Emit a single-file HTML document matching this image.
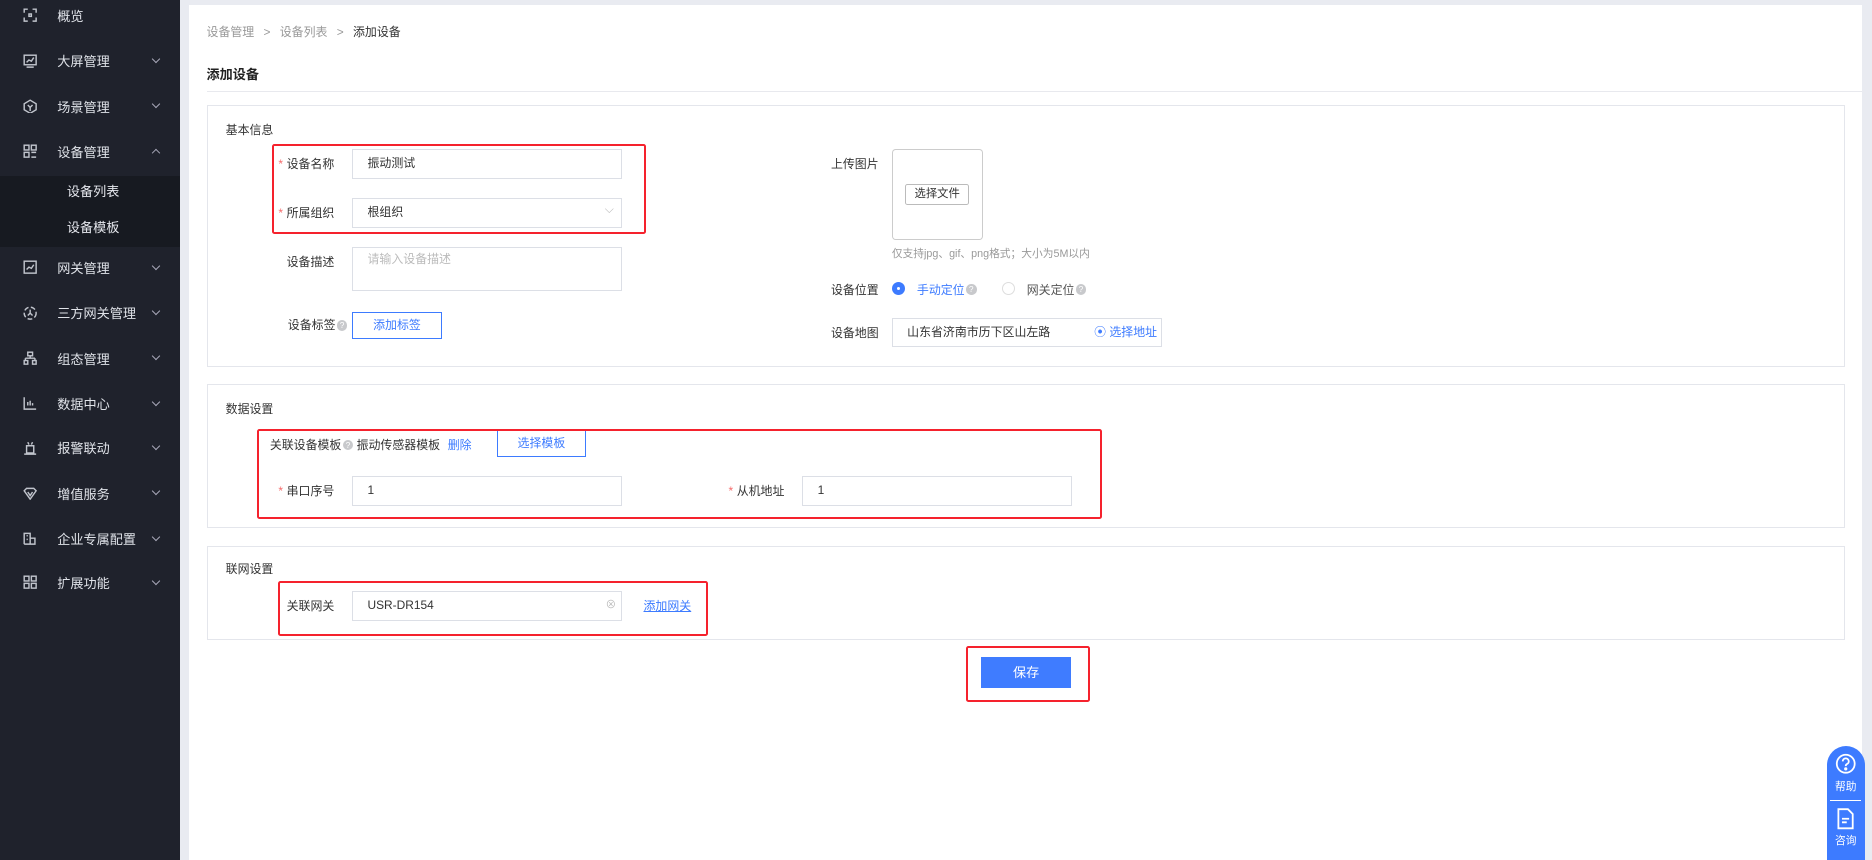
<!DOCTYPE html>
<html><head><meta charset="utf-8">
<style>
*{box-sizing:border-box;margin:0;padding:0}
html,body{width:1872px;height:860px;overflow:hidden;background:#e9ebf1}
#w{position:relative;width:1568px;height:720px;zoom:1.19388;font-family:"Liberation Sans","Noto Sans CJK SC",sans-serif;font-size:10px;color:#333}
.a{position:absolute;white-space:nowrap}
#sb{position:absolute;left:0;top:0;width:151px;height:720px;background:#1f222c}
.mi{position:absolute;left:0;width:151px;height:20px;color:#dfe2e8;font-size:11px}
.mi span{position:absolute;left:48px;top:1px}
.mi svg{position:absolute;left:19px;top:3px}
.mi i{position:absolute;left:128px;top:5px;width:5px;height:5px;border-right:1px solid #aab;border-bottom:1px solid #aab;transform:rotate(45deg)}
#main{position:absolute;left:158px;top:4px;width:1402px;height:716px;background:#fff}
.card{position:absolute;left:173px;width:1372px;border:1px solid #e4e6ec;background:#fff}
.lb{position:absolute;font-size:10px;color:#333;text-align:right;white-space:nowrap}
.lb b{color:#f56c6c;font-weight:normal;margin-right:3px}
.in{position:absolute;border:1px solid #dcdfe6;background:#fff;font-size:10px;padding-left:12px;line-height:23px;color:#333}
.rb{position:absolute;border:2px solid #f5222d;border-radius:2px}
.q{display:inline-block;width:9px;height:9px;border-radius:50%;background:#c8c9cc;color:#fff;font-size:7px;line-height:9px;text-align:center;vertical-align:1px;margin-left:1px}
.blue{color:#3d7bff}
</style></head><body><div id="w">
<div id="sb">
<div class="a" style="left:0;top:147px;width:151px;height:60px;background:#171a21"></div>
<div class="mi" style="top:4px"><svg width="12" height="12" fill="none" stroke="#c0c4cc" stroke-width="1.2"><path d="M1 4V1h3M8 1h3v3M11 8v3H8M4 11H1V8"/><rect x="5" y="5" width="2" height="2"/></svg><span>概览</span></div>
<div class="mi" style="top:42px"><svg width="12" height="12" fill="none" stroke="#c0c4cc" stroke-width="1.2"><rect x="1" y="1" width="10" height="8"/><path d="M3 7l2-2 2 1 2-3M3 11h6"/></svg><span>大屏管理</span><i></i></div>
<div class="mi" style="top:80px"><svg width="12" height="12" fill="none" stroke="#c0c4cc" stroke-width="1.2"><path d="M6 1l5 3v5l-5 3-5-3V4z M4 5l2 2 2-2M6 7v3"/></svg><span>场景管理</span><i></i></div>
<div class="mi" style="top:118px"><svg width="12" height="12" fill="none" stroke="#c0c4cc" stroke-width="1.2"><rect x="1" y="1" width="4" height="4"/><rect x="7" y="1" width="4" height="4"/><rect x="1" y="7" width="4" height="4"/><path d="M7 7h4M7 11h4"/></svg><span>设备管理</span><i style="transform:rotate(225deg);top:8px"></i></div>
<div class="a" style="left:56px;top:152px;color:#e6e8ee;font-size:11px">设备列表</div>
<div class="a" style="left:56px;top:182px;color:#e6e8ee;font-size:11px">设备模板</div>
<div class="mi" style="top:215px"><svg width="12" height="12" fill="none" stroke="#c0c4cc" stroke-width="1.2"><rect x="1" y="1" width="10" height="10"/><path d="M3 8l2-2 2 1 2-3"/></svg><span>网关管理</span><i></i></div>
<div class="mi" style="top:253px"><svg width="12" height="12" fill="none" stroke="#c0c4cc" stroke-width="1.2"><circle cx="6" cy="6" r="5" stroke-dasharray="4 2"/><path d="M6 3v3l-2 2M6 6l2 2"/></svg><span>三方网关管理</span><i></i></div>
<div class="mi" style="top:291px"><svg width="12" height="12" fill="none" stroke="#c0c4cc" stroke-width="1.2"><rect x="4" y="1" width="4" height="3"/><path d="M6 4v2M2 6h8M2 6v2M10 6v2"/><rect x="1" y="8" width="3" height="3"/><rect x="8" y="8" width="3" height="3"/></svg><span>组态管理</span><i></i></div>
<div class="mi" style="top:329px"><svg width="12" height="12" fill="none" stroke="#c0c4cc" stroke-width="1.2"><path d="M1 1v10h10M4 8V5M6 8V4M8 8V6"/></svg><span>数据中心</span><i></i></div>
<div class="mi" style="top:366px"><svg width="12" height="12" fill="none" stroke="#c0c4cc" stroke-width="1.2"><path d="M3 4h6v6H3zM1 11h10M4 1l1 2M8 1l-1 2"/></svg><span>报警联动</span><i></i></div>
<div class="mi" style="top:404px"><svg width="12" height="12" fill="none" stroke="#c0c4cc" stroke-width="1.2"><path d="M1 4l5 7 5-7-2-2H3zM4 5l2 3 2-3"/></svg><span>增值服务</span><i></i></div>
<div class="mi" style="top:442px"><svg width="12" height="12" fill="none" stroke="#c0c4cc" stroke-width="1.2"><path d="M1 11V2h5v9M6 6h4v5H1M3 4h1M3 7h1"/></svg><span>企业专属配置</span><i></i></div>
<div class="mi" style="top:479px"><svg width="12" height="12" fill="none" stroke="#c0c4cc" stroke-width="1.2"><rect x="1" y="1" width="4" height="4"/><rect x="7" y="1" width="4" height="4"/><rect x="1" y="7" width="4" height="4"/><rect x="7" y="7" width="4" height="4"/></svg><span>扩展功能</span><i></i></div>
</div>
<div id="main"></div>
<div class="a" style="left:173px;top:19px;color:#999">设备管理 <span style="margin:0 5px">&gt;</span> 设备列表 <span style="margin:0 5px">&gt;</span> <span style="color:#333">添加设备</span></div>
<div class="a" style="left:173px;top:54px;font-size:11px;font-weight:bold;color:#222">添加设备</div>
<div class="a" style="left:173px;top:76px;width:1387px;height:1px;background:#e8e9ee"></div>

<div class="card" style="top:88px;height:219px"></div>
<div class="a" style="left:189px;top:101px">基本信息</div>
<div class="lb" style="right:1288px;top:130px"><b>*</b>设备名称</div>
<div class="in" style="left:295px;top:125px;width:226px;height:25px">振动测试</div>
<div class="lb" style="right:1288px;top:171px"><b>*</b>所属组织</div>
<div class="in" style="left:295px;top:166px;width:226px;height:25px">根组织<span style="position:absolute;right:6px;top:-3px;color:#bbb">⌵</span></div>
<div class="lb" style="right:1288px;top:212px">设备描述</div>
<div class="in" style="left:295px;top:207px;width:226px;height:37px;color:#bbb;line-height:20px">请输入设备描述</div>
<div class="lb" style="right:1277px;top:265px">设备标签<span class="q">?</span></div>
<div class="a blue" style="left:295px;top:261px;width:75px;height:23px;border:1px solid #3d7bff;text-align:center;line-height:21px">添加标签</div>
<div class="rb" style="left:228px;top:121px;width:313px;height:75px"></div>

<div class="a" style="left:696px;top:130px">上传图片</div>
<div class="a" style="left:747px;top:125px;width:76px;height:76px;border:1px solid #ccc;border-radius:3px"></div>
<div class="a" style="left:758px;top:154px;width:54px;height:18px;border:1px solid #bbb;border-radius:2px;text-align:center;line-height:16px;font-size:9.5px">选择文件</div>
<div class="a" style="left:747px;top:206px;color:#999;font-size:9px">仅支持jpg、gif、png格式；大小为5M以内</div>
<div class="a" style="left:696px;top:235px">设备位置</div>
<div class="a" style="left:747px;top:236px;width:11px;height:11px;border-radius:50%;background:#3d7bff"><div style="position:absolute;left:4px;top:4px;width:3px;height:3px;border-radius:50%;background:#fff"></div></div>
<div class="a blue" style="left:768px;top:235px">手动定位<span class="q">?</span></div>
<div class="a" style="left:839px;top:236px;width:11px;height:11px;border-radius:50%;border:1px solid #ddd"></div>
<div class="a" style="left:860px;top:235px;color:#555">网关定位<span class="q">?</span></div>
<div class="a" style="left:696px;top:271px">设备地图</div>
<div class="in" style="left:747px;top:266px;width:226px;height:25px">山东省济南市历下区山左路<span class="blue" style="position:absolute;right:3px;top:0">⦿ 选择地址</span></div>

<div class="card" style="top:322px;height:120px"></div>
<div class="a" style="left:189px;top:335px">数据设置</div>
<div class="a" style="left:226px;top:365px">关联设备模板<span class="q">?</span> 振动传感器模板</div>
<div class="a blue" style="left:375px;top:365px">删除</div>
<div class="a blue" style="left:416px;top:360px;width:75px;height:23px;border:1px solid #3d7bff;text-align:center;line-height:21px">选择模板</div>
<div class="lb" style="right:1288px;top:404px"><b>*</b>串口序号</div>
<div class="in" style="left:295px;top:399px;width:226px;height:25px">1</div>
<div class="lb" style="right:911px;top:404px"><b>*</b>从机地址</div>
<div class="in" style="left:672px;top:399px;width:226px;height:25px">1</div>
<div class="rb" style="left:215px;top:359px;width:708px;height:76px"></div>

<div class="card" style="top:457px;height:79px"></div>
<div class="a" style="left:189px;top:469px">联网设置</div>
<div class="lb" style="right:1288px;top:500px">关联网关</div>
<div class="in" style="left:295px;top:495px;width:226px;height:25px">USR-DR154<span style="position:absolute;right:4px;top:0;color:#bbb;font-size:9px">⊗</span></div>
<div class="a blue" style="left:539px;top:500px;text-decoration:underline">添加网关</div>
<div class="rb" style="left:233px;top:487px;width:360px;height:46px"></div>

<div class="a" style="left:822px;top:550px;width:75px;height:26px;background:#3f7cff;color:#fff;text-align:center;line-height:26px;font-size:11px">保存</div>
<div class="rb" style="left:809px;top:541px;width:104px;height:47px"></div>

<div class="a" style="left:1530px;top:625px;width:32px;height:100px;background:#3d7bff;border-radius:16px 16px 0 0;color:#fff;font-size:9px;text-align:center">
<svg width="18" height="18" style="margin-top:6px" fill="none" stroke="#fff" stroke-width="1.5"><circle cx="9" cy="9" r="7.5"/><path d="M6.5 7a2.5 2.5 0 1 1 3.5 2.3c-.8.4-1 .9-1 1.7"/><circle cx="9" cy="13.3" r=".6" fill="#fff"/></svg>
<div style="margin-top:1px">帮助</div>
<div style="margin:5px 3px 0;height:1px;background:#fff"></div>
<svg width="16" height="18" style="margin-top:6px" fill="none" stroke="#fff" stroke-width="1.5"><path d="M2 1h8l4 4v12H2z M5 9h6M5 12h4"/></svg>
<div>咨询</div>
</div>
</div></body></html>
